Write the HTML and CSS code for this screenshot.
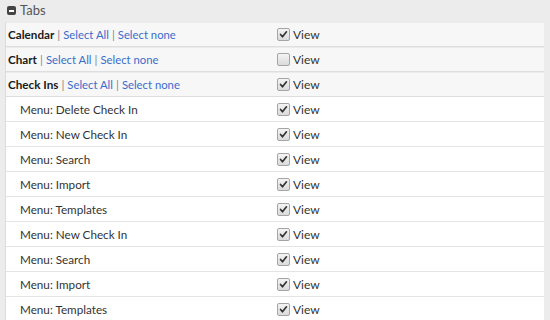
FILE: index.html
```html
<!DOCTYPE html>
<html>
<head>
<meta charset="utf-8">
<link rel="stylesheet" href="styles.css">
</head>
<body>
<div class="panel">
  <div class="panel-head">
    <span class="collapse-icon"><span class="minus"></span></span>
    <span class="panel-title">Tabs</span>
  </div>
  <div class="perm-table">
    <div class="row group">
      <div class="label"><b>Calendar</b> <span class="sep">|</span> <a class="lnk">Select All</a> <span class="sep">|</span> <a class="lnk">Select none</a></div>
      <div class="perm"><span class="cb on"><svg viewBox="0 0 13 13"><path d="M3 6.5 L5.3 9.2 L10 3.3" fill="none" stroke="#333" stroke-width="2" stroke-linecap="round" stroke-linejoin="round"/></svg></span><span class="view">View</span></div>
    </div>
    <div class="row group">
      <div class="label"><b>Chart</b> <span class="sep">|</span> <a class="lnk">Select All</a> <span class="sep">|</span> <a class="lnk">Select none</a></div>
      <div class="perm"><span class="cb"></span><span class="view">View</span></div>
    </div>
    <div class="row group">
      <div class="label"><b>Check Ins</b> <span class="sep">|</span> <a class="lnk">Select All</a> <span class="sep">|</span> <a class="lnk">Select none</a></div>
      <div class="perm"><span class="cb on"><svg viewBox="0 0 13 13"><path d="M3 6.5 L5.3 9.2 L10 3.3" fill="none" stroke="#333" stroke-width="2" stroke-linecap="round" stroke-linejoin="round"/></svg></span><span class="view">View</span></div>
    </div>
    <div class="row item">
      <div class="label">Menu: Delete Check In</div>
      <div class="perm"><span class="cb on"><svg viewBox="0 0 13 13"><path d="M3 6.5 L5.3 9.2 L10 3.3" fill="none" stroke="#333" stroke-width="2" stroke-linecap="round" stroke-linejoin="round"/></svg></span><span class="view">View</span></div>
    </div>
    <div class="row item">
      <div class="label">Menu: New Check In</div>
      <div class="perm"><span class="cb on"><svg viewBox="0 0 13 13"><path d="M3 6.5 L5.3 9.2 L10 3.3" fill="none" stroke="#333" stroke-width="2" stroke-linecap="round" stroke-linejoin="round"/></svg></span><span class="view">View</span></div>
    </div>
    <div class="row item">
      <div class="label">Menu: Search</div>
      <div class="perm"><span class="cb on"><svg viewBox="0 0 13 13"><path d="M3 6.5 L5.3 9.2 L10 3.3" fill="none" stroke="#333" stroke-width="2" stroke-linecap="round" stroke-linejoin="round"/></svg></span><span class="view">View</span></div>
    </div>
    <div class="row item">
      <div class="label">Menu: Import</div>
      <div class="perm"><span class="cb on"><svg viewBox="0 0 13 13"><path d="M3 6.5 L5.3 9.2 L10 3.3" fill="none" stroke="#333" stroke-width="2" stroke-linecap="round" stroke-linejoin="round"/></svg></span><span class="view">View</span></div>
    </div>
    <div class="row item">
      <div class="label">Menu: Templates</div>
      <div class="perm"><span class="cb on"><svg viewBox="0 0 13 13"><path d="M3 6.5 L5.3 9.2 L10 3.3" fill="none" stroke="#333" stroke-width="2" stroke-linecap="round" stroke-linejoin="round"/></svg></span><span class="view">View</span></div>
    </div>
    <div class="row item">
      <div class="label">Menu: New Check In</div>
      <div class="perm"><span class="cb on"><svg viewBox="0 0 13 13"><path d="M3 6.5 L5.3 9.2 L10 3.3" fill="none" stroke="#333" stroke-width="2" stroke-linecap="round" stroke-linejoin="round"/></svg></span><span class="view">View</span></div>
    </div>
    <div class="row item">
      <div class="label">Menu: Search</div>
      <div class="perm"><span class="cb on"><svg viewBox="0 0 13 13"><path d="M3 6.5 L5.3 9.2 L10 3.3" fill="none" stroke="#333" stroke-width="2" stroke-linecap="round" stroke-linejoin="round"/></svg></span><span class="view">View</span></div>
    </div>
    <div class="row item">
      <div class="label">Menu: Import</div>
      <div class="perm"><span class="cb on"><svg viewBox="0 0 13 13"><path d="M3 6.5 L5.3 9.2 L10 3.3" fill="none" stroke="#333" stroke-width="2" stroke-linecap="round" stroke-linejoin="round"/></svg></span><span class="view">View</span></div>
    </div>
    <div class="row item">
      <div class="label">Menu: Templates</div>
      <div class="perm"><span class="cb on"><svg viewBox="0 0 13 13"><path d="M3 6.5 L5.3 9.2 L10 3.3" fill="none" stroke="#333" stroke-width="2" stroke-linecap="round" stroke-linejoin="round"/></svg></span><span class="view">View</span></div>
    </div>
  </div>
</div>
</body>
</html>
```

FILE: styles.css
```css
html, body {
  margin: 0;
  padding: 0;
  background: #ececec;
  font-family: Lato, "Open Sans", sans-serif;
  font-size: 11.7px;
  color: #333;
  overflow: hidden;
}
.panel {
  margin-left: 5px;
  width: 539px;
}
.panel-head {
  height: 22px;
  display: flex;
  align-items: center;
  padding-left: 2px;
  color: #555;
  font-size: 13px;
}
.collapse-icon {
  width: 9px;
  height: 9px;
  background: #444;
  border-radius: 2px;
  display: flex;
  align-items: center;
  justify-content: center;
  margin-right: 4px;
  margin-top: -1px;
}
.minus {
  width: 5px;
  height: 2px;
  background: #fff;
}
.panel-title {
  margin-top: -2px;
}
.perm-table {
  border-left: 1px solid #dcdcdc;
}
.row {
  height: 24px;
  border-bottom: 1px solid #e4e4e4;
  display: flex;
  align-items: center;
}
.row.group {
  background: #f7f7f7;
  border-bottom: 1px solid #dedede;
  box-shadow: inset 0 1px 0 #ebebeb;
}
.row.item {
  background: #fff;
}
.label {
  width: 271px;
  white-space: nowrap;
}
.group .label {
  padding-left: 2px;
  width: 269px;
}
.item .label {
  padding-left: 14px;
  width: 257px;
}
.label b {
  color: #1a1a1a;
  font-weight: 700;
}
.sep {
  color: #888;
}
.lnk {
  color: #3b6ccc;
  text-decoration: none;
  font-size: 11.3px;
}
.perm {
  display: flex;
  align-items: center;
}
.cb {
  width: 11px;
  height: 11px;
  border: 1px solid #a5a5a5;
  border-radius: 2px;
  background: linear-gradient(#f4f4f4, #dadada);
  display: inline-block;
  margin-right: 3px;
}
.cb svg {
  width: 11px;
  height: 11px;
  display: block;
}
.view {
  color: #333;
  font-size: 12px;
}
```
